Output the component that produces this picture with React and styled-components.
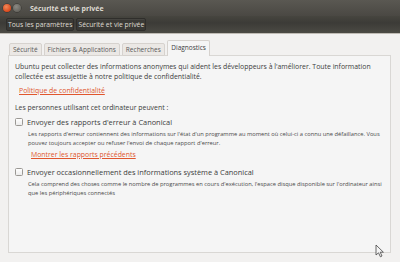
import React from "react";
import styled, { createGlobalStyle } from "styled-components";

const Global = createGlobalStyle`
  html, body { margin: 0; padding: 0; background: #f2f1f0; }
  body { font-family: "Open Sans", "Noto Sans", sans-serif; color: #3c3c3c; }
  * { box-sizing: border-box; }
`;

const Window = styled.div`
  position: relative;
  width: 400px;
  height: 262px;
  display: flex;
  flex-direction: column;
  overflow: hidden;
  background: #f2f1f0;
`;

const TitleBar = styled.div`
  height: 16px;
  display: flex;
  align-items: center;
  padding-left: 3px;
  gap: 2px;
  background: linear-gradient(#5a5852, #4a4843);
`;

const WinButton = styled.span`
  width: 8px;
  height: 8px;
  border-radius: 50%;
  background: ${(p) => (p.$close ? "radial-gradient(circle at 40% 35%, #f28a5a, #d9481c 70%)" : "radial-gradient(circle at 40% 35%, #8c8a84, #66645e 70%)")};
  box-shadow: 0 0 0 0.5px rgba(0,0,0,0.4);
`;

const Title = styled.span`
  margin-left: 7px;
  font-size: 7px;
  font-weight: 700;
  color: #dfdbd2;
`;

const Toolbar = styled.div`
  height: 18px;
  display: flex;
  align-items: center;
  gap: 2px;
  padding: 0 6px;
  background: linear-gradient(#46453f, #3c3b37 40%, #4b4a44);
  border-bottom: 1px solid #bfbbb4;
`;

const Crumb = styled.div`
  height: 13px;
  display: flex;
  align-items: center;
  padding: 0 1px;
  font-size: 6.8px;
  color: #dfdbd2;
  background: #3a3935;
  border: 1px solid #2f2e2b;
  border-radius: 2px;
  box-shadow: inset 0 1px 0 rgba(255,255,255,0.06);
`;

const Content = styled.div`
  flex: 1;
  display: flex;
  flex-direction: column;
  padding: 6px 9px 9px 8px;
`;

const TabRow = styled.div`
  display: flex;
  align-items: flex-end;
  padding-left: 1px;
  gap: 2px;
  margin-bottom: -1px;
  position: relative;
  z-index: 1;
`;

const Tab = styled.div`
  height: ${(p) => (p.$active ? "16px" : "13px")};
  display: flex;
  align-items: center;
  padding: ${(p) => (p.$active ? "0 3.5px 2px" : "0 3px")};
  font-size: 6.5px;
  color: ${(p) => (p.$active ? "#3c3c3c" : "#5a5a5a")};
  background: ${(p) => (p.$active ? "#f5f5f5" : "#ebe8e5")};
  border: 1px solid #d6d2ce;
  border-bottom: ${(p) => (p.$active ? "none" : "1px solid #d6d2ce")};
  border-radius: 2px 2px 0 0;
`;

const Panel = styled.div`
  flex: 1;
  background: #f5f5f5;
  border: 1px solid #d9d7d4;
  padding: 6px 6px 0 6px;
  display: flex;
  flex-direction: column;
`;

const Para = styled.p`
  margin: ${(p) => p.$m || "0"};
  font-size: 6.9px;
  line-height: 10px;
  color: #3c3c3c;
  white-space: nowrap;
`;

const Link = styled.a`
  font-size: 6.9px;
  color: #e0562e;
  text-decoration: underline;
  margin: ${(p) => p.$m || "0"};
  align-self: flex-start;
`;

const Option = styled.div`
  display: flex;
  flex-direction: column;
  margin-top: ${(p) => p.$mt || "0"};
`;

const CheckRow = styled.label`
  display: flex;
  align-items: center;
  gap: 4px;
  font-size: 7.4px;
  color: #3c3c3c;
`;

const Box = styled.span`
  width: 8px;
  height: 8px;
  border: 1px solid #9a9894;
  border-radius: 1.5px;
  background: linear-gradient(#ffffff, #ececec);
  flex: none;
`;

const Desc = styled.p`
  margin: 3px 0 0 13px;
  font-size: 5.75px;
  line-height: 9px;
  color: #4a4a4a;
  white-space: nowrap;
`;

const Cursor = styled.svg`
  position: absolute;
  left: 375px;
  top: 244px;
`;

export default function App() {
  return (
    <Window>
      <Global />
      <TitleBar>
        <WinButton $close />
        <WinButton />
        <Title>Sécurité et vie privée</Title>
      </TitleBar>
      <Toolbar>
        <Crumb>Tous les paramètres</Crumb>
        <Crumb>Sécurité et vie privée</Crumb>
      </Toolbar>
      <Content>
        <TabRow>
          <Tab>Sécurité</Tab>
          <Tab>Fichiers &amp; Applications</Tab>
          <Tab>Recherches</Tab>
          <Tab $active>Diagnostics</Tab>
        </TabRow>
        <Panel>
          <Para>
            Ubuntu peut collecter des informations anonymes qui aident les développeurs à l'améliorer. Toute information
            <br />
            collectée est assujettie à notre politique de confidentialité.
          </Para>
          <Link $m="4px 0 0 4px">Politique de confidentialité</Link>
          <Para $m="8px 0 0 0">Les personnes utilisant cet ordinateur peuvent :</Para>
          <Option $mt="4px">
            <CheckRow>
              <Box />
              Envoyer des rapports d'erreur à Canonical
            </CheckRow>
            <Desc>
              Les rapports d'erreur contiennent des informations sur l'état d'un programme au moment où celui-ci a connu une défaillance. Vous
              <br />
              pouvez toujours accepter ou refuser l'envoi de chaque rapport d'erreur.
            </Desc>
            <Link $m="2px 0 0 16px">Montrer les rapports précédents</Link>
          </Option>
          <Option $mt="8px">
            <CheckRow>
              <Box />
              Envoyer occasionnellement des informations système à Canonical
            </CheckRow>
            <Desc>
              Cela comprend des choses comme le nombre de programmes en cours d'exécution, l'espace disque disponible sur l'ordinateur ainsi
              <br />
              que  les périphériques connectés
            </Desc>
          </Option>
        </Panel>
      </Content>
      <Cursor width="10" height="14" viewBox="0 0 10 14">
        <path d="M1 1 L1 11 L3.5 8.8 L5.4 12.8 L7 12 L5.2 8.2 L8.4 8.2 Z" fill="#f4f4f4" stroke="#444" strokeWidth="0.8" />
      </Cursor>
    </Window>
  );
}
